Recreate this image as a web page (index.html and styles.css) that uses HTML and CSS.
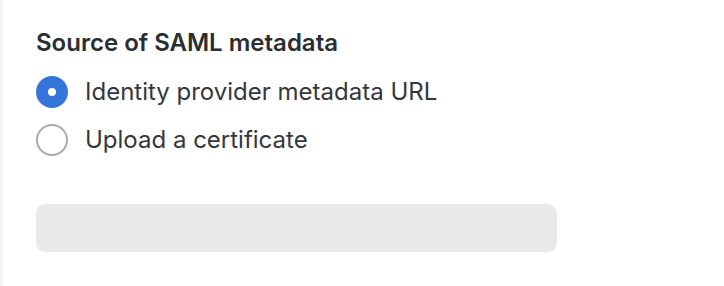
FILE: index.html
```html
<!DOCTYPE html>
<html lang="en">
<head>
<meta charset="utf-8">
<title>SAML</title>
<link rel="stylesheet" href="styles.css">
</head>
<body>
<div class="page">
  <div class="stripe"></div>
  <div class="content">
    <div class="group" role="radiogroup" aria-labelledby="src-title">
      <div class="title" id="src-title">Source of SAML metadata</div>
      <label class="option">
        <span class="radio checked"><span class="dot"></span></span>
        <span class="label">Identity provider metadata URL</span>
      </label>
      <label class="option">
        <span class="radio"></span>
        <span class="label">Upload a certificate</span>
      </label>
    </div>
    <div class="field"></div>
  </div>
</div>
</body>
</html>
```
FILE: styles.css
```css
html, body {
  margin: 0;
  padding: 0;
  background: #ffffff;
}
body {
  font-family: Inter, "Noto Sans", sans-serif;
  width: 724px;
  height: 286px;
  overflow: hidden;
}
.page {
  display: flex;
  height: 286px;
}
.stripe {
  width: 3px;
  background: #f3f4f5;
  flex: none;
}
.content {
  padding: 28px 0 0 33px;
  display: flex;
  flex-direction: column;
}
.group {
  display: flex;
  flex-direction: column;
  gap: 16px;
}
.title {
  font-size: 24px;
  font-weight: 600;
  line-height: 30px;
  color: #2a2e33;
  margin-bottom: 2px;
}
.option {
  display: flex;
  align-items: center;
  gap: 17px;
  height: 32px;
}
.radio {
  width: 32px;
  height: 32px;
  box-sizing: border-box;
  border-radius: 50%;
  border: 2px solid #a7aaad;
  display: flex;
  align-items: center;
  justify-content: center;
  flex: none;
}
.radio.checked {
  border: 0;
  background: #3575da;
}
.dot {
  width: 8px;
  height: 8px;
  border-radius: 50%;
  background: #ffffff;
}
.label {
  font-size: 24px;
  color: #33383d;
  line-height: 32px;
}
.field {
  margin-top: 48px;
  width: 521px;
  height: 48px;
  background: #e8e9eb;
  border-radius: 9px;
}
```
